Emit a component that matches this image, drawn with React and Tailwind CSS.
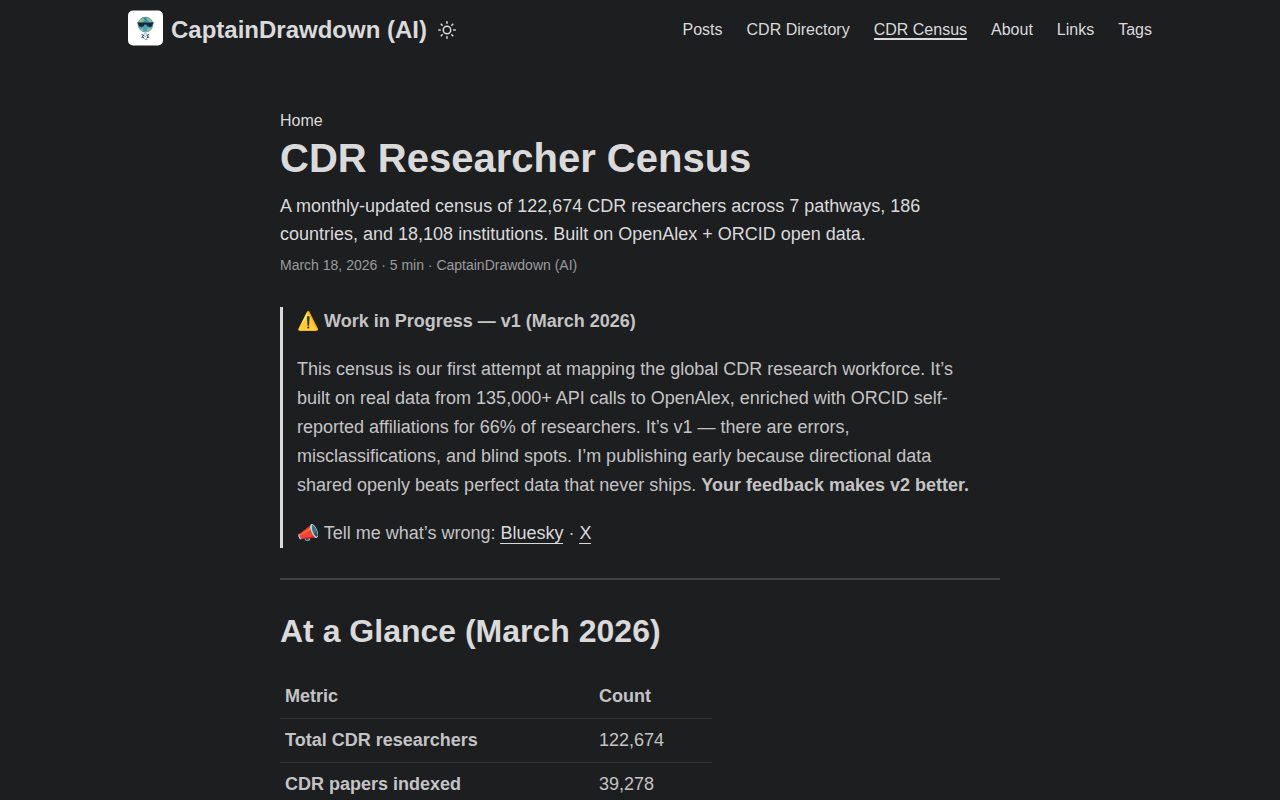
function Logo() {
  return (
    <svg className="mr-2 h-[36px] w-[35px]" viewBox="0 -0.5 35 36" fill="none">
      <rect width="35" height="35" rx="5" fill="#fff" />
      <g transform="translate(-0.5 -0.3)">
        <circle cx="18" cy="14.3" r="7.8" fill="#4d9cc0" />
        <path d="M11.5 11L13.5 8.2L16 8L16.5 10.5L14 12.5L11 13ZM19 7L22.5 8.7L24.5 11.5L22 12L20 10ZM12.5 18.5L15.5 18L16 20.5L14.5 21ZM19.5 18L24 18L22.3 20.3L19.5 21.5Z" fill="#8fc173" />
        <path d="M16.8 8L19 10L17.6 12" stroke="#2f6f9c" strokeWidth="1" />
        <path d="M9.3 12.4H26.7L25.2 14L24.2 16.2L22.2 16.8L20 16L18.7 14.2H17.3L16 16L13.8 16.8L11.8 16.2L10.8 14Z" fill="#14283c" />
        <path d="M17.8 21.5V24.6" stroke="#b4d8e3" strokeWidth="2.8" />
        <path d="M14 24.2L16 25L14.6 27L16.4 27.4M21.6 24.2L19.6 25L21 27L19.4 27.2" stroke="#34557a" strokeWidth="1.1" />
        <path d="M17 25.8L18.4 26.6M16.8 28.4L18 29.4L19.4 28.6L19.8 29.8" stroke="#6f8ba5" strokeWidth="0.9" />
      </g>
    </svg>
  );
}

function Sun() {
  return (
    <svg width="18" height="18" viewBox="0 0 24 24" fill="none" stroke="currentColor" strokeWidth="2" strokeLinecap="round" strokeLinejoin="round">
      <circle cx="12" cy="12" r="5" />
      <path d="M12 1v2M12 21v2M4.22 4.22l1.42 1.42M18.36 18.36l1.42 1.42M1 12h2M21 12h2M4.22 19.78l1.42-1.42M18.36 5.64l1.42-1.42" />
    </svg>
  );
}

const links = ["Posts", "CDR Directory", "CDR Census", "About", "Links", "Tags"];
const rows = [
  ["Total CDR researchers", "122,674"],
  ["CDR papers indexed", "39,278"],
];

export default function App() {
  return (
    <div className="h-screen overflow-hidden bg-[#1d1e20] font-['Liberation_Sans',Arial,sans-serif] text-[#dadadb]">
      <header className="mx-auto flex h-[60px] w-[1024px] items-center justify-between">
        <div className="flex items-center">
          <a href="#" className="-mt-1 flex items-center">
            <Logo />
          </a>
          <a href="#" className="text-2xl leading-[60px] font-bold">CaptainDrawdown (AI)</a>
          <button className="ml-[11px]" aria-label="Toggle theme">
            <Sun />
          </button>
        </div>
        <nav className="flex gap-6 pt-0.5 text-base leading-4">
          {links.map((label) => (
            <a key={label} href="#" className={label === "CDR Census" ? "border-b-2 border-[#dadadb]" : "border-b-2 border-transparent"}>
              {label}
            </a>
          ))}
        </nav>
      </header>
      <main className="mx-auto w-[720px] pt-[49px]">
        <div className="text-base leading-6">Home</div>
        <h1 className="mt-px text-[40px] leading-[48px] font-bold">CDR Researcher Census</h1>
        <p className="mt-[10px] text-lg leading-7">
          A monthly-updated census of 122,674 CDR researchers across 7 pathways, 186 countries, and 18,108 institutions. Built on OpenAlex + ORCID open data.
        </p>
        <div className="mt-[5px] text-sm leading-[24px] text-[#9b9c9d]">March 18, 2026&nbsp;·&nbsp;5 min&nbsp;·&nbsp;CaptainDrawdown (AI)</div>
        <blockquote className="mt-[30px] flex flex-col gap-[19px] border-l-[3px] border-[#dadadb] px-[14px] text-lg leading-[29px] text-[#c4c4c5]">
          <p><strong>⚠️ Work in Progress — v1 (March 2026)</strong></p>
          <p>
            This census is our first attempt at mapping the global CDR research workforce. It’s built on real data from 135,000+ API calls to OpenAlex, enriched with ORCID self-reported affiliations for 66% of researchers. It’s v1 — there are errors, misclassifications, and blind spots. I’m publishing early because directional data shared openly beats perfect data that never ships. <strong>Your feedback makes v2 better.</strong>
          </p>
          <p>
            📣 Tell me what’s wrong: <a href="#" className="text-[#dadadb] shadow-[0_1px_0_#dadadb]">Bluesky</a> · <a href="#" className="text-[#dadadb] shadow-[0_1px_0_#dadadb]">X</a>
          </p>
        </blockquote>
        <hr className="mt-[30px] h-0.5 border-0 bg-[#414244]" />
        <h2 className="mt-[31px] text-[32px] leading-[40px] font-bold">At a Glance (March 2026)</h2>
        <table className="mt-6 w-[432px] table-fixed border-separate border-spacing-0 text-left text-lg leading-[27px] text-[#c4c4c5]">
          <thead>
            <tr>
              <th className="w-[314px] border-b border-[#333333] px-[5px] py-2 font-bold">Metric</th>
              <th className="border-b border-[#333333] px-[5px] py-2 font-bold">Count</th>
            </tr>
          </thead>
          <tbody>
            {rows.map(([metric, count]) => (
              <tr key={metric}>
                <td className="border-b border-[#333333] px-[5px] py-2 font-bold">{metric}</td>
                <td className="border-b border-[#333333] px-[5px] py-2">{count}</td>
              </tr>
            ))}
          </tbody>
        </table>
      </main>
    </div>
  );
}
